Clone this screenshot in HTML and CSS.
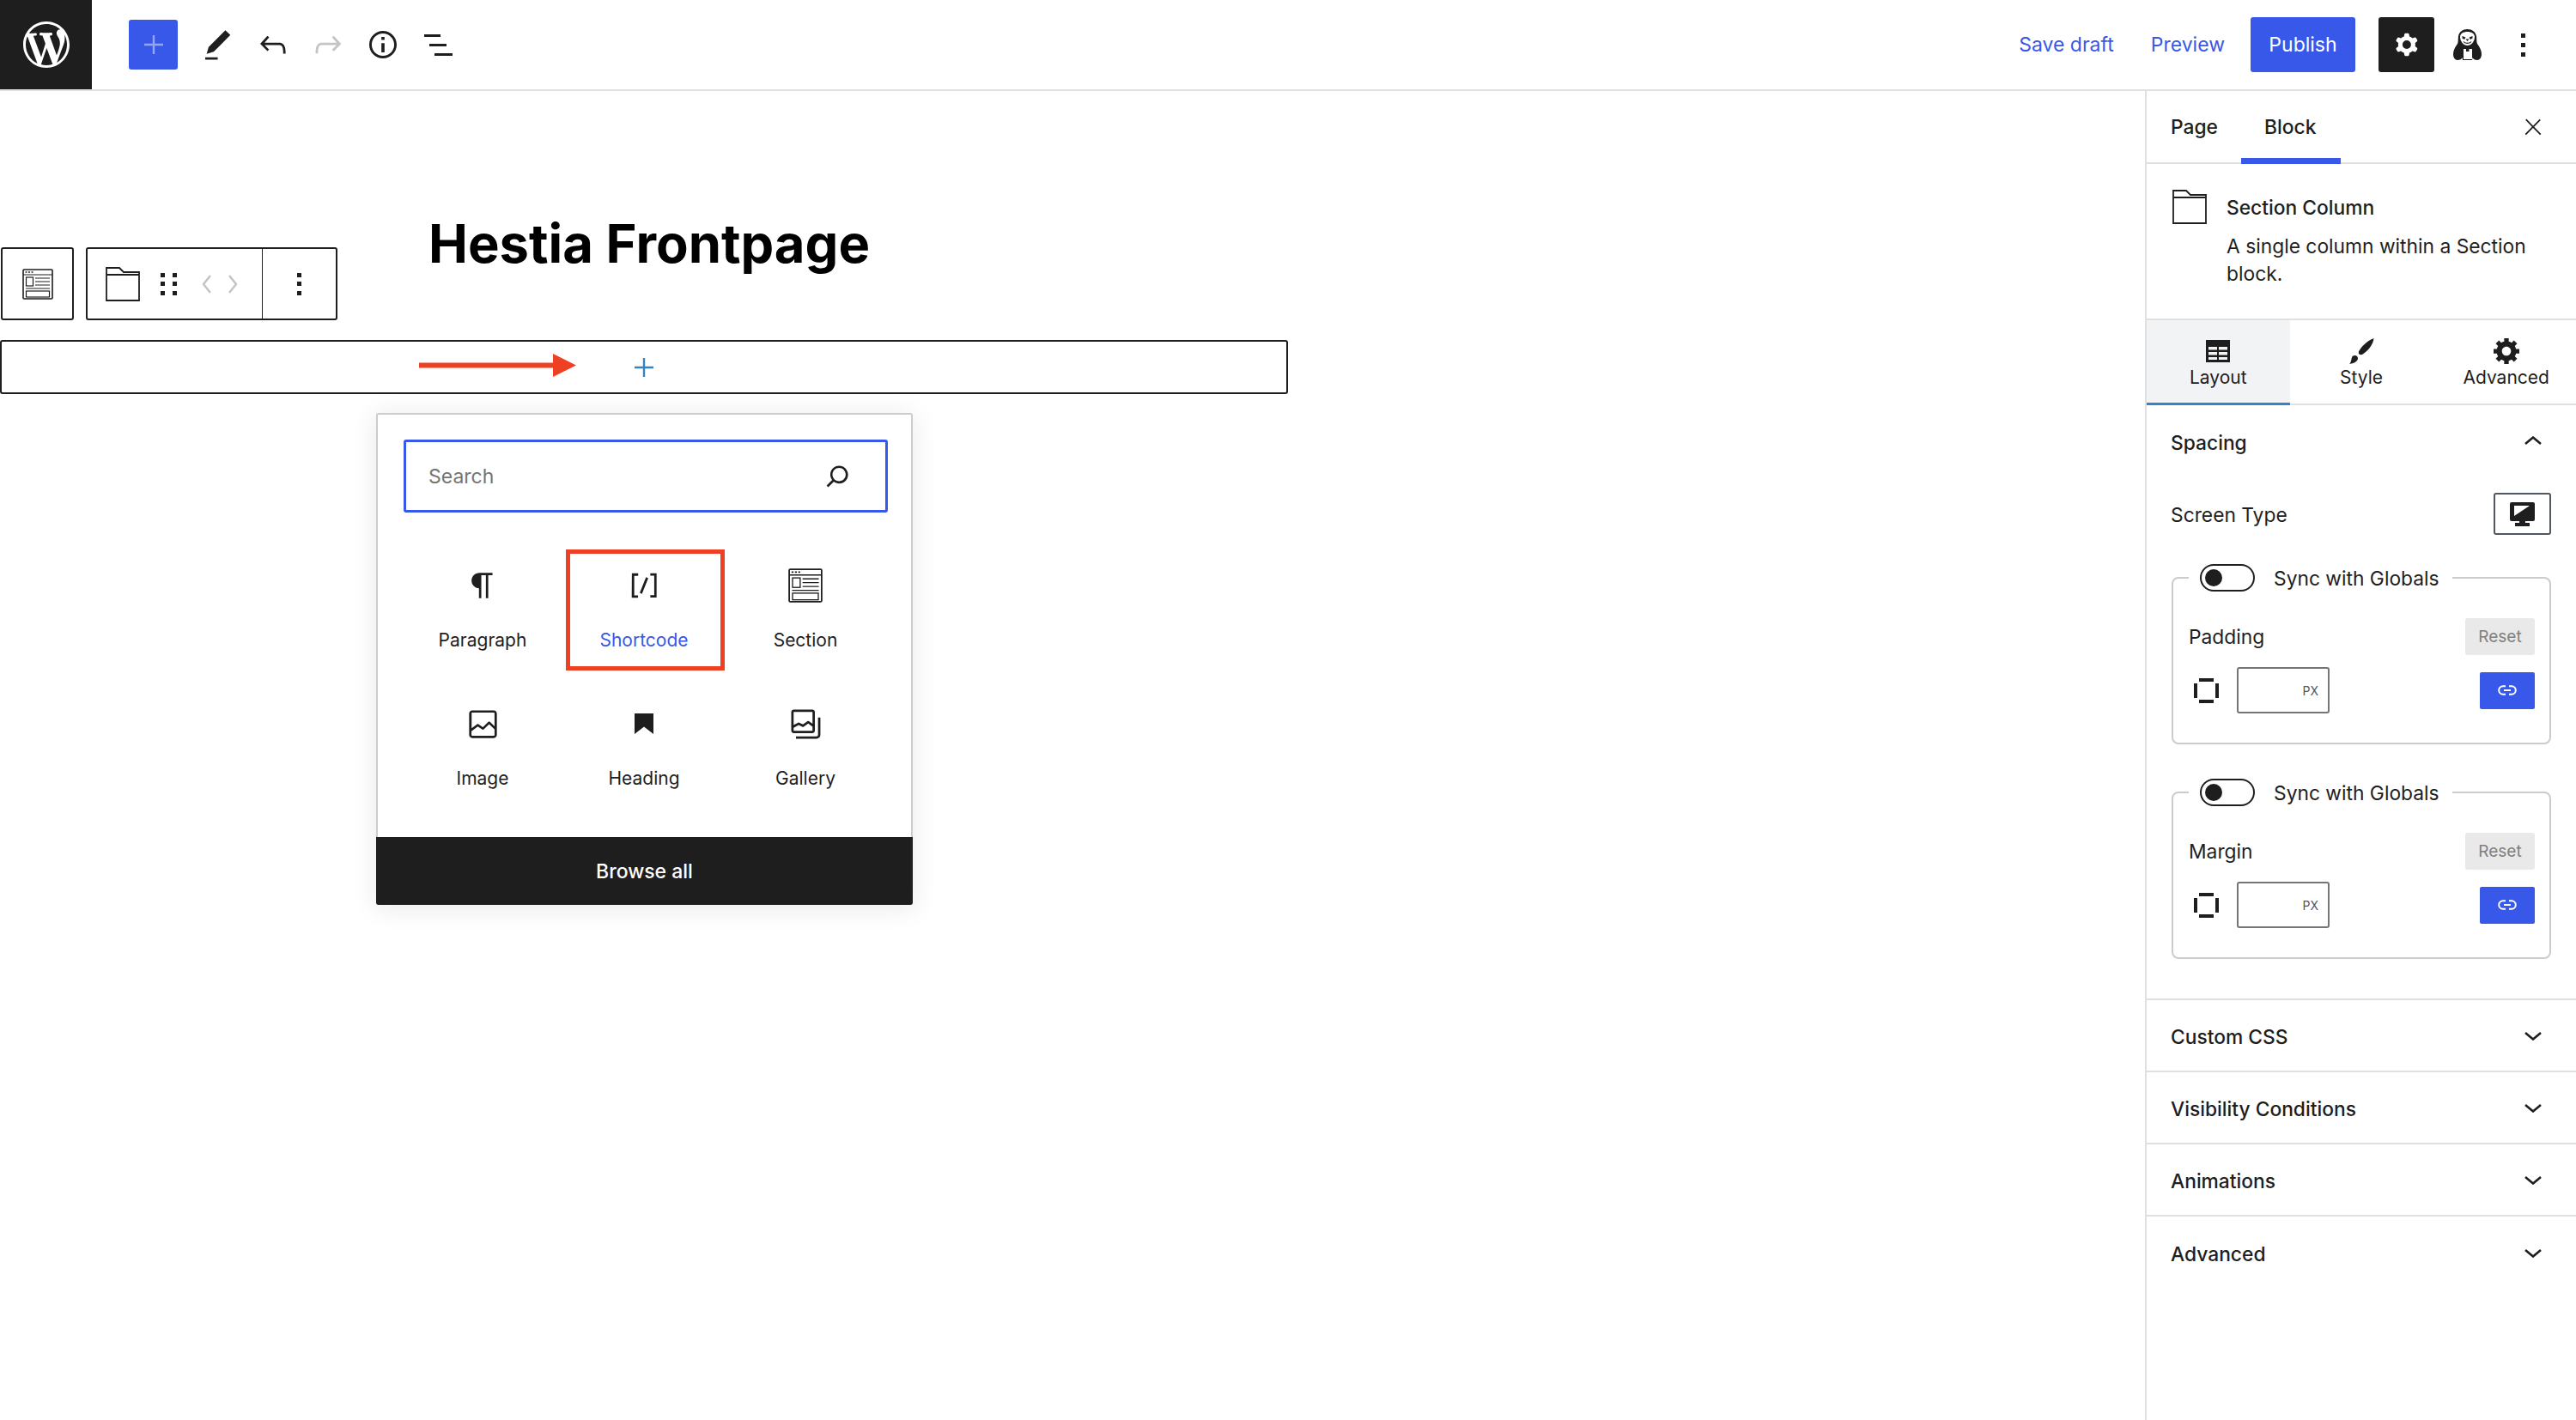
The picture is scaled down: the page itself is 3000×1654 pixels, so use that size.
FILE: index.html
```html
<!DOCTYPE html>
<html lang="en">
<head>
<meta charset="utf-8">
<title>Hestia Frontpage</title>
<link rel="stylesheet" href="styles.css">
</head>
<body>
<div class="editor">
  <header class="topbar">
    <div class="logo">
      <svg width="54" height="54" viewBox="0 0 20 20"><path fill="#fff" d="M20 10c0-5.51-4.49-10-10-10C4.48 0 0 4.49 0 10c0 5.52 4.48 10 10 10 5.51 0 10-4.48 10-10zM7.78 15.37L4.37 6.22c.55-.02 1.17-.08 1.17-.08.5-.06.44-1.13-.06-1.11 0 0-1.45.11-2.37.11-.18 0-.37 0-.58-.01C4.12 2.69 6.87 1.11 10 1.11c2.33 0 4.45.87 6.05 2.34-.68-.11-1.65.39-1.65 1.58 0 .74.45 1.36.9 2.1.35.61.55 1.36.55 2.46 0 1.49-1.4 5-1.4 5l-3.03-8.37c.54-.02.82-.17.82-.17.5-.05.44-1.25-.06-1.22 0 0-1.44.12-2.38.12-.87 0-2.33-.12-2.33-.12-.5-.03-.56 1.2-.06 1.22l.92.08 1.26 3.41zM17.41 10c.24-.64.74-1.87.43-4.25.7 1.29 1.05 2.71 1.05 4.25 0 3.29-1.73 6.24-4.4 7.78.97-2.59 1.94-5.2 2.92-7.78zM6.1 18.09C3.12 16.65 1.11 13.53 1.11 10c0-1.3.23-2.48.72-3.59C3.25 10.3 4.67 14.2 6.1 18.09zm4.03-6.63l2.58 6.98c-.86.29-1.76.45-2.71.45-.79 0-1.57-.11-2.29-.33.81-2.38 1.62-4.74 2.42-7.1z"/></svg>
    </div>
    <div class="tools">
      <button class="add-btn" aria-label="Add block">
        <svg width="22" height="22" viewBox="0 0 22 22"><path d="M11 0v22M0 11h22" stroke="#93a6f3" stroke-width="2.4" fill="none"/></svg>
      </button>
      <svg class="tool tool-pen" width="30" height="35" viewBox="4 2 16.5 19"><path fill="#1e1e1e" d="M20.1 5.1L16.9 2 6.2 12.7l-1.3 4.4 4.5-1.3L20.1 5.1zM4 20.8h8v-1.5H4v1.5z"/></svg>
      <svg class="tool tool-undo" width="30" height="22" viewBox="4 6.5 16 11"><path fill="#1e1e1e" d="M18.3 11.7c-.6-.6-1.4-.9-2.3-.9H6.7l2.9-3.3-1.1-1-4.5 5L8.5 16l1-1-2.7-2.7H16c.5 0 .9.2 1.3.5 1 1 1 3.4 1 4.5v.3h1.5v-.2c0-1.5 0-4.3-1.5-5.7z"/></svg>
      <svg class="tool tool-redo" width="30" height="22" viewBox="4 6.5 16 11"><path fill="#c4c4c4" d="M15.6 6.5l-1.1 1 2.9 3.3H8c-.9 0-1.7.3-2.3.9-1.4 1.5-1.4 4.2-1.4 5.6v.2h1.5v-.3c0-1.1 0-3.5 1-4.5.3-.3.7-.5 1.3-.5h9.2L14.5 15l1.1 1.1 4.6-4.6-4.6-5z"/></svg>
      <svg class="tool tool-info" width="32" height="32" viewBox="3.2 3.2 17.6 17.6"><path fill="#1e1e1e" d="M12 3.2c-4.8 0-8.8 3.9-8.8 8.8 0 4.8 3.9 8.8 8.8 8.8 4.8 0 8.8-3.9 8.8-8.8 0-4.8-4-8.8-8.8-8.8zm0 16c-4 0-7.2-3.3-7.2-7.2C4.8 8 8 4.8 12 4.8s7.2 3.3 7.2 7.2c0 4-3.2 7.2-7.2 7.2zM11 17h2v-6h-2v6zm0-8h2V7h-2v2z"/></svg>
      <svg class="tool tool-list" width="33" height="26" viewBox="0 0 33 26"><path fill="#1e1e1e" d="M0 1h19v3H0zM6 12h20v3H6zM12 23h21v3H12z"/></svg>
    </div>
    <div class="actions">
      <a class="link-action link-save">Save draft</a>
      <a class="link-action link-preview">Preview</a>
      <button class="publish">Publish</button>
      <button class="settings" aria-label="Settings">
        <svg width="40" height="40" viewBox="0 0 24 24"><path fill="#fff" fill-rule="evenodd" d="M10.289 4.836A1 1 0 0111.275 4h1.306a1 1 0 01.987.836l.244 1.466c.787.26 1.503.679 2.108 1.218l1.393-.522a1 1 0 011.216.437l.653 1.13a1 1 0 01-.23 1.273l-1.148.944a6.025 6.025 0 010 2.435l1.149.946a1 1 0 01.23 1.272l-.653 1.13a1 1 0 01-1.216.437l-1.394-.522c-.605.54-1.32.958-2.108 1.218l-.244 1.466a1 1 0 01-.987.836h-1.306a1 1 0 01-.986-.836l-.244-1.466a5.995 5.995 0 01-2.108-1.218l-1.394.522a1 1 0 01-1.217-.436l-.653-1.131a1 1 0 01.23-1.272l1.149-.946a6.026 6.026 0 010-2.435l-1.148-.944a1 1 0 01-.23-1.272l.653-1.131a1 1 0 011.217-.437l1.393.522a5.994 5.994 0 012.108-1.218l.244-1.466zM14.929 12a3 3 0 11-6 0 3 3 0 016 0z"/></svg>
      </button>
      <svg class="penguin" width="33" height="36" viewBox="0 0 33 36"><path fill="#1e1e1e" d="M16.5 0C22 0 26 3 27 8c.5 4 0 7 1 9 3 4 5 8 5 12 0 4-2 7-5 7-3 0-4.500-1-5.500-3L22 36H11l-.5-3c-1 2-2.500 3-5.500 3-3 0-5-3-5-7 0-4 2-8 5-12 1-2 .5-5 1-9C7 3 11 0 16.500 0z"/><path fill="#fff" d="M16.500 3C12 3 8 5 8 9c0 5 4 10 8.500 10S25 14 25 9c0-4-4-6-8.500-6z"/><path fill="#fff" d="M12 23h3v3h3.500v-3H22v12H12z"/><path fill="#1e1e1e" d="M10.500 8l4 1.500-1.500 2.500-2.500-1.500zM22.500 8l-4 1.500 1.500 2.500 2.500-1.500zM14.500 11.500h4l-2 2.500z"/><path d="M12 14.500c1.500 2.500 7.500 2.500 9 0" stroke="#1e1e1e" stroke-width="1.200" fill="none"/></svg>
      <svg class="more" width="5" height="27" viewBox="0 0 5 27"><path fill="#1e1e1e" d="M0 0h5v5H0zM0 11h5v5H0zM0 22h5v5H0z"/></svg>
    </div>
  </header>

  <div class="workspace">
    <main class="canvas">
      <div class="block-toolbar">
        <div class="tb-group tb-single">
          <svg width="36" height="36" viewBox="0 0 36 36"><use href="#section-icon"/></svg>
        </div>
        <div class="tb-group">
          <div class="tb-cell tb-main">
            <svg class="tb-folder" width="40" height="40" viewBox="0 0 40 40"><use href="#folder-icon"/></svg>
            <svg class="tb-drag" width="20" height="26" viewBox="0 0 20 26"><path fill="#1e1e1e" d="M0 0h5v5H0zM14 0h5v5h-5zM0 10h5v5H0zM14 10h5v5h-5zM0 21h5v5H0zM14 21h5v5h-5z"/></svg>
            <svg class="tb-mover" width="42" height="22" viewBox="0 0 42 22"><path d="M10 1L2 11l8 10M32 1l8 10-8 10" stroke="#c4c4c4" stroke-width="2.500" fill="none"/></svg>
          </div>
          <div class="tb-cell tb-more">
            <svg width="5" height="26" viewBox="0 0 5 26"><path fill="#1e1e1e" d="M0 0h5v5H0zM0 10h5v5H0zM0 21h5v5H0z"/></svg>
          </div>
        </div>
      </div>

      <h1 class="post-title">Hestia Frontpage</h1>

      <div class="appender">
        <svg class="red-arrow" width="183" height="27" viewBox="0 0 183 27"><path fill="#ee4123" d="M0 10.500h156V0l27 13.500L156 27V16.500H0z"/></svg>
        <svg width="22" height="22" viewBox="0 0 22 22"><path d="M11 0v22M0 11h22" stroke="#3582c4" stroke-width="2.400" fill="none"/></svg>
      </div>

      <section class="inserter">
        <div class="inserter-body">
          <div class="search">
            <span class="search-text">Search</span>
            <svg width="41" height="41" viewBox="0 0 24 24"><path fill="#1e1e1e" d="M13 5c-3.300 0-6 2.700-6 6 0 1.400.5 2.700 1.300 3.700l-3.800 3.800 1.100 1.100 3.800-3.800c1 .8 2.300 1.300 3.700 1.300 3.300 0 6-2.700 6-6S16.300 5 13 5zm0 10.500c-2.500 0-4.500-2-4.500-4.500s2-4.500 4.500-4.500 4.500 2 4.500 4.500-2 4.500-4.500 4.500z"/></svg>
          </div>
          <div class="block-grid">
            <div class="block-item">
              <span class="block-icon"><svg width="44" height="44" viewBox="0 0 24 24"><path fill="#1e1e1e" d="M18.300 4H9.900v-.1l-.9.2c-2.300.4-4 2.400-4 4.800s1.700 4.400 4 4.800l.7.1V20h1.500V5.500h2.900V20h1.500V5.500h2.700V4z"/></svg></span>
              <span class="block-label">Paragraph</span>
            </div>
            <div class="block-item is-highlighted">
              <span class="block-icon"><svg width="44" height="44" viewBox="0 0 24 24"><path fill="#1e1e1e" d="M16 4.200v1.500h2.500v12.500H16v1.500h4V4.200h-4zM4.200 19.800h4v-1.500H5.800V5.800h2.500V4.200h-4l-.1 15.600zm5.100-3.100l1.400.6 4-10-1.400-.6-4 10z"/></svg></span>
              <span class="block-label">Shortcode</span>
            </div>
            <div class="block-item">
              <span class="block-icon"><svg width="40" height="40" viewBox="0 0 36 36"><use href="#section-icon"/></svg></span>
              <span class="block-label">Section</span>
            </div>
            <div class="block-item">
              <span class="block-icon"><svg width="43" height="43" viewBox="0 0 24 24"><path fill="#1e1e1e" d="M19 3H5c-1.100 0-2 .9-2 2v14c0 1.100.9 2 2 2h14c1.100 0 2-.9 2-2V5c0-1.100-.9-2-2-2zM5 4.500h14c.3 0 .5.2.5.5v8.400l-3-2.900c-.3-.3-.8-.3-1 0L11.900 14 9 12c-.3-.2-.6-.2-.8 0l-3.600 2.600V5c-.1-.3.1-.5.4-.5zm14 15H5c-.3 0-.5-.2-.5-.5v-2.400l4.100-3 3 1.900c.3.2.7.2.9-.1L16 12l3.500 3.400V19c0 .3-.2.5-.5.5z"/></svg></span>
              <span class="block-label">Image</span>
            </div>
            <div class="block-item">
              <span class="block-icon"><svg width="22" height="24" viewBox="0 0 22 24"><path fill="#1e1e1e" d="M0 0h22v24l-11-8.500L0 24z"/></svg></span>
              <span class="block-label">Heading</span>
            </div>
            <div class="block-item">
              <span class="block-icon"><svg width="44" height="44" viewBox="0 0 24 24"><path fill="#1e1e1e" fill-rule="evenodd" d="M16.375 4.500H4.625a.125.125 0 0 0-.125.125v8.254l2.859-1.540a.75.75 0 0 1 .68-.016l2.384 1.142 2.890-2.074a.75.75 0 0 1 .874 0l2.313 1.660V4.625a.125.125 0 0 0-.125-.125zm.125 9.398-2.750-1.975-2.813 2.020a.75.75 0 0 1-.76.067l-2.444-1.170L4.500 14.583v1.792c0 .069.056.125.125.125h11.750a.125.125 0 0 0 .125-.125v-2.477zM4.625 3C3.728 3 3 3.728 3 4.625v11.750C3 17.273 3.728 18 4.625 18h11.750c.898 0 1.625-.727 1.625-1.625V4.625C18 3.728 17.273 3 16.375 3H4.625zM20 8v11c0 .69-.31 1-.999 1H6v1.500h13.001c1.520 0 2.499-.982 2.499-2.500V8H20z"/></svg></span>
              <span class="block-label">Gallery</span>
            </div>
          </div>
        </div>
        <div class="browse-all">Browse all</div>
      </section>
    </main>

    <aside class="sidebar">
      <div class="side-tabs">
        <span class="side-tab">Page</span>
        <span class="side-tab is-active">Block</span>
        <svg class="side-close" width="30" height="30" viewBox="0 0 24 24"><path fill="#1e1e1e" d="M13 11.800l6.100-6.300-1-1-6.100 6.200-6.100-6.300-1 1 6.100 6.300-6.500 6.700 1 1 6.500-6.600 6.500 6.600 1-1z"/></svg>
      </div>
      <div class="block-card">
        <svg class="card-icon" width="40" height="40" viewBox="0 0 40 40"><use href="#folder-icon"/></svg>
        <div class="card-text">
          <div class="card-title">Section Column</div>
          <p class="card-desc">A single column within a Section block.</p>
        </div>
      </div>
      <div class="inspector-tabs">
        <div class="inspector-tab is-active">
          <svg width="28" height="26" viewBox="0 0 28 26"><path fill="#1e1e1e" fill-rule="evenodd" d="M0 0h28v26H0zM3 8v3.500h10V8zM15 8v3.500h10V8zM3 14v3.500h10V14zM15 14v3.500h10V14zM3 20v3h10v-3zM15 20v3h10v-3z"/></svg>
          <span>Layout</span>
        </div>
        <div class="inspector-tab">
          <svg width="30" height="30" viewBox="0 0 30 30"><path fill="#1e1e1e" d="M29.500 0c-.5 6-5 13-12 18-2 1.500-3.500 1.500-5 .5-1-1-1-2.500 0-4C17 7 24 2 29.500 0zM4.500 21c3-2 6-1 6.500 2 .3 3-3 6-10 7 2.500-2 2-6 3.500-9z"/></svg>
          <span>Style</span>
        </div>
        <div class="inspector-tab inspector-tab-last">
          <svg width="30" height="30" viewBox="1 2 17 17"><path fill="#1e1e1e" d="M18 12h-2.180c-.17.7-.44 1.350-.81 1.930l1.540 1.540-2.100 2.100-1.540-1.540c-.58.36-1.230.63-1.910.79V19H8v-2.180c-.68-.16-1.330-.43-1.910-.79l-1.540 1.540-2.120-2.120 1.540-1.540c-.36-.58-.63-1.230-.79-1.910H1V9.030h2.170c.16-.7.44-1.350.8-1.940L2.430 5.550l2.100-2.100 1.540 1.540c.58-.37 1.240-.64 1.930-.81V2h3v2.180c.68.16 1.330.43 1.910.79l1.540-1.540 2.120 2.120-1.540 1.540c.36.59.64 1.240.8 1.940H18V12zm-8.500 1.500c1.660 0 3-1.340 3-3s-1.340-3-3-3-3 1.340-3 3 1.340 3 3 3z"/></svg>
          <span>Advanced</span>
        </div>
      </div>

      <section class="panel panel-open">
        <div class="panel-head">
          <span>Spacing</span>
          <svg width="20" height="10" viewBox="0 0 20 10"><path d="M1 9l9-7.500L19 9" stroke="#1e1e1e" stroke-width="2.600" fill="none"/></svg>
        </div>
        <div class="screen-row">
          <span class="screen-label">Screen Type</span>
          <div class="screen-btn">
            <svg width="29" height="28" viewBox="0 0 29 28"><path fill="#1e1e1e" fill-rule="evenodd" d="M2 0h25a2 2 0 0 1 2 2v18a2 2 0 0 1-2 2h-9v2h5v4H6v-4h5v-2H2a2 2 0 0 1-2-2V2a2 2 0 0 1 2-2zM5 4v12L23 4z"/></svg>
          </div>
        </div>
        <fieldset class="dim-group">
          <legend class="dim-legend">
            <span class="toggle"><span class="knob"></span></span>
            <span>Sync with Globals</span>
          </legend>
          <div class="dim-head">
            <span>Padding</span>
            <span class="reset">Reset</span>
          </div>
          <div class="dim-row">
            <svg width="29" height="29" viewBox="0 0 29 29"><path fill="#1e1e1e" d="M6 0h17v4H6zM6 25h17v4H6zM0 6h4v17H0zM25 6h4v17h-4z"/></svg>
            <div class="dim-input">PX</div>
            <button class="dim-link" aria-label="Link values"><svg width="22" height="12" viewBox="0 0 22 12"><path d="M9 1.200H6a4.800 4.800 0 0 0 0 9.600h3M13 1.200h3a4.800 4.800 0 0 1 0 9.600h-3M7 6h8" stroke="#fff" stroke-width="2" fill="none"/></svg></button>
          </div>
        </fieldset>
        <fieldset class="dim-group">
          <legend class="dim-legend">
            <span class="toggle"><span class="knob"></span></span>
            <span>Sync with Globals</span>
          </legend>
          <div class="dim-head">
            <span>Margin</span>
            <span class="reset">Reset</span>
          </div>
          <div class="dim-row">
            <svg width="29" height="29" viewBox="0 0 29 29"><path fill="#1e1e1e" d="M6 0h17v4H6zM6 25h17v4H6zM0 6h4v17H0zM25 6h4v17h-4z"/></svg>
            <div class="dim-input">PX</div>
            <button class="dim-link" aria-label="Link values"><svg width="22" height="12" viewBox="0 0 22 12"><path d="M9 1.200H6a4.800 4.800 0 0 0 0 9.600h3M13 1.200h3a4.800 4.800 0 0 1 0 9.600h-3M7 6h8" stroke="#fff" stroke-width="2" fill="none"/></svg></button>
          </div>
        </fieldset>
      </section>
      <section class="panel panel-closed"><span>Custom CSS</span><svg width="20" height="10" viewBox="0 0 20 10"><path d="M1 1l9 7.500L19 1" stroke="#1e1e1e" stroke-width="2.600" fill="none"/></svg></section>
      <section class="panel panel-closed"><span>Visibility Conditions</span><svg width="20" height="10" viewBox="0 0 20 10"><path d="M1 1l9 7.500L19 1" stroke="#1e1e1e" stroke-width="2.600" fill="none"/></svg></section>
      <section class="panel panel-closed"><span>Animations</span><svg width="20" height="10" viewBox="0 0 20 10"><path d="M1 1l9 7.500L19 1" stroke="#1e1e1e" stroke-width="2.600" fill="none"/></svg></section>
      <section class="panel panel-closed panel-last"><span>Advanced</span><svg width="20" height="10" viewBox="0 0 20 10"><path d="M1 1l9 7.500L19 1" stroke="#1e1e1e" stroke-width="2.600" fill="none"/></svg></section>
    </aside>
  </div>
</div>

<svg class="defs" width="0" height="0" aria-hidden="true">
  <defs>
    <g id="section-icon" fill="none" stroke="#1e1e1e">
      <rect x="1" y="1" width="34" height="34" rx="1" stroke-width="1.600"/>
      <path d="M1 7h34" stroke-width="1.200"/>
      <path d="M3.500 4h2M7 4h2M10.500 4h2" stroke-width="1.600"/>
      <rect x="4.500" y="10" width="8" height="10" stroke-width="1.200"/>
      <path d="M15 11h17M15 15h17M15 19h17M4 23h28" stroke-width="1.200"/>
      <rect x="4.500" y="26" width="27" height="7" stroke-width="1.200"/>
    </g>
    <g id="folder-icon" fill="none" stroke="#1e1e1e" stroke-width="1.800">
      <path d="M1 1h15l5 5h18v33H1zM1 9h38"/>
    </g>
  </defs>
</svg>
</body>
</html>
```
FILE: styles.css
```css
* { box-sizing: border-box; }
html, body { margin: 0; padding: 0; background: #fff; }
body { font-family: "Inter", "Liberation Sans", sans-serif; color: #1e1e1e; font-size: 22.8px; }
button { border: 0; padding: 0; font: inherit; cursor: pointer; }
svg { display: block; flex: none; }
.defs { position: absolute; }

.editor { width: 3000px; height: 1654px; overflow: hidden; display: flex; flex-direction: column; }

/* top bar */
.topbar { height: 106px; flex: none; display: flex; align-items: center; border-bottom: 2px solid #e0e0e0; }
.logo { width: 107px; height: 104px; background: #1e1e1e; display: flex; align-items: center; justify-content: center; }
.tools { display: flex; align-items: center; margin-left: 43px; }
.add-btn { width: 57px; height: 58px; background: #3858e9; border-radius: 3px; display: flex; align-items: center; justify-content: center; }
.tool-pen { margin-left: 32px; }
.tool-undo { margin-left: 34px; }
.tool-redo { margin-left: 34px; }
.tool-info { margin-left: 33px; }
.tool-list { margin-left: 32px; }
.actions { margin-left: auto; display: flex; align-items: center; padding-right: 59px; }
.link-action { color: #3858e9; font-size: 23px; }
.link-preview { margin-left: 43px; }
.publish { margin-left: 30px; width: 122px; height: 64px; background: #3858e9; color: #fff; border-radius: 3px; font-size: 23px; }
.settings { margin-left: 27px; width: 65px; height: 64px; background: #1e1e1e; border-radius: 3px; display: flex; align-items: center; justify-content: center; }
.penguin { margin-left: 22px; }
.more { margin-left: 46px; }

.workspace { flex: 1; display: flex; min-height: 0; }

/* canvas */
.canvas { flex: 1; min-width: 0; position: relative; }
.block-toolbar { position: absolute; left: 1px; top: 182px; display: flex; gap: 14px; }
.tb-group { height: 85px; display: flex; border: 2px solid #1e1e1e; border-radius: 3px; background: #fff; }
.tb-single { width: 85px; align-items: center; justify-content: center; }
.tb-cell { display: flex; align-items: center; }
.tb-main { width: 203px; padding-left: 21px; }
.tb-drag { margin-left: 24px; }
.tb-mover { margin-left: 28px; }
.tb-more { width: 86px; justify-content: center; border-left: 1px solid #1e1e1e; }
.post-title { margin: 140px 0 0; padding-left: 499px; font-size: 61.5px; line-height: 76px; font-weight: 700; color: #000; }
.appender { position: relative; width: 1500px; height: 63px; margin-top: 74px; border: 2px solid #1e1e1e; border-radius: 3px; display: flex; align-items: center; justify-content: center; }
.red-arrow { position: absolute; left: 486px; top: 14px; }
.inserter { width: 625px; margin: 22px 0 0 438px; border: 2px solid #ccc; border-radius: 3px; background: #fff; box-shadow: 0 3px 30px rgba(25, 30, 35, .1); }
.inserter-body { padding: 29px 27px 33px 28px; }
.search { height: 85px; margin-left: 2px; border: 3px solid #3858e9; border-radius: 3px; display: flex; align-items: center; justify-content: space-between; padding: 0 35px 0 26px; }
.search-text { color: #757575; font-size: 23px; }
.block-grid { display: grid; grid-template-columns: repeat(3, 188px); grid-auto-rows: 141px; row-gap: 20px; margin-top: 43px; }
.block-item { position: relative; display: flex; flex-direction: column; align-items: center; padding-top: 18px; }
.block-icon { height: 48px; display: flex; align-items: center; justify-content: center; }
.block-label { margin-top: 25px; line-height: 30px; font-size: 21px; }
.is-highlighted .block-label { color: #3858e9; }
.is-highlighted::after { content: ""; position: absolute; inset: 0 0 0 3px; border: 5px solid #ee4123; }
.browse-all { height: 79px; margin: 0 -2px -2px; background: #1e1e1e; color: #fff; border-radius: 0 0 3px 3px; display: flex; align-items: center; justify-content: center; font-size: 23px; font-weight: 500; }

/* sidebar */
.sidebar { width: 502px; flex: none; border-left: 2px solid #e0e0e0; }
.side-tabs { height: 85px; position: relative; display: flex; align-items: center; border-bottom: 2px solid #e0e0e0; padding-left: 28px; font-weight: 500; }
.side-tab { position: relative; }
.side-tab.is-active { margin-left: 54px; }
.side-tab.is-active::after { content: ""; position: absolute; left: -27px; right: -29px; top: 50px; height: 7px; background: #3858e9; }
.side-close { margin-left: auto; margin-right: 35px; }
.block-card { height: 182px; display: flex; gap: 23px; padding: 30px 30px 0; border-bottom: 2px solid #e0e0e0; }
.card-text { padding-top: 5px; }
.card-title { font-weight: 500; line-height: 32px; margin-bottom: 13px; }
.card-desc { margin: 0; line-height: 32px; }
.inspector-tabs { display: grid; grid-template-columns: repeat(3, 1fr); height: 99px; border-bottom: 2px solid #e0e0e0; }
.inspector-tab { height: 99px; padding-top: 21px; display: flex; flex-direction: column; align-items: center; font-size: 21px; }
.inspector-tab-last { padding-left: 4px; }
.inspector-tab span { margin-top: 3px; line-height: 26px; }
.inspector-tab svg { height: 30px; }
.inspector-tab.is-active { background: #f2f3f5; border-bottom: 3px solid #3582c4; }

.panel { border-bottom: 2px solid #e0e0e0; }
.panel-open { padding: 0 29px 46px 29px; }
.panel-last { border-bottom: 0; }
.panel-head { height: 86px; margin-left: -1px; display: flex; align-items: center; justify-content: space-between; padding-right: 11px; font-weight: 500; }
.panel-head svg { margin-bottom: 4px; }
.screen-row { margin: 16px 0 0 -1px; display: flex; align-items: center; justify-content: space-between; }
.screen-label { position: relative; top: 1px; }
.screen-btn { width: 67px; height: 49px; border: 2px solid #50575e; border-radius: 3px; display: flex; align-items: center; justify-content: center; }
.dim-group { margin: 34px 0 0; padding: 31px 17px 34px 18px; border: 2px solid #ccc; border-radius: 8px; min-width: 0; }
.dim-group + .dim-group { margin-top: 40px; }
.dim-legend { display: flex; align-items: center; gap: 22px; height: 32px; padding: 0 15px 0 13px; margin-left: 0; }
.toggle { width: 64px; height: 32px; border: 2px solid #1e1e1e; border-radius: 16px; display: flex; align-items: center; padding-left: 4px; }
.knob { width: 20px; height: 20px; border-radius: 50%; background: #1e1e1e; }
.dim-head { display: flex; align-items: center; justify-content: space-between; height: 43px; }
.reset { width: 81px; height: 43px; background: #e9e9e9; color: #808080; border-radius: 3px; font-size: 19px; display: flex; align-items: center; justify-content: center; }
.dim-row { margin-top: 14px; display: flex; align-items: center; padding-left: 6px; }
.dim-input { margin-left: 21px; width: 108px; height: 54px; border: 2px solid #757575; border-radius: 3px; display: flex; align-items: center; justify-content: flex-end; padding-right: 11px; font-size: 14px; color: #50575e; }
.dim-link { margin-left: auto; width: 64px; height: 43px; background: #3858e9; border-radius: 2px; display: flex; align-items: center; justify-content: center; }
.panel-closed { height: 84px; display: flex; align-items: center; justify-content: space-between; padding: 2px 40px 0 28px; font-weight: 500; }
```
